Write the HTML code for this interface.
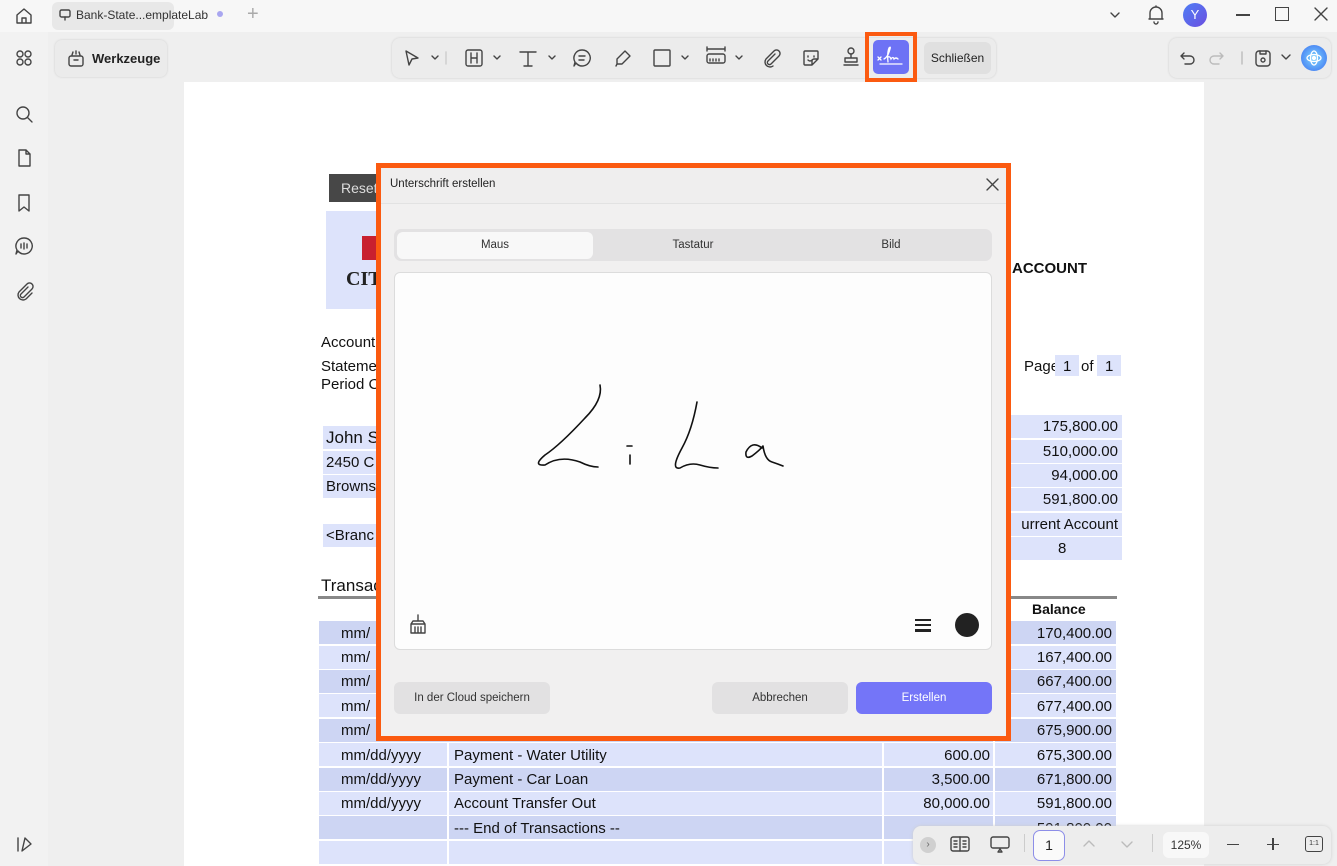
<!DOCTYPE html>
<html><head><meta charset="utf-8"><style>
*{box-sizing:border-box;margin:0;padding:0}
body{width:1337px;height:866px;overflow:hidden;background:#efefef;font-family:"Liberation Sans",sans-serif;position:relative;color:#222}
.a{position:absolute}
.ic{position:absolute;fill:none;stroke:#444;stroke-width:1.4;stroke-linecap:round;stroke-linejoin:round}
.cal{font-family:"Liberation Sans",sans-serif;font-size:15px;color:#111}
.cell{position:absolute;height:23px;font-size:15px;color:#111;line-height:23px;white-space:nowrap;overflow:hidden}
.r{text-align:right;padding-right:4px}
</style></head><body>
<!-- top bar -->
<div class="a" style="left:0;top:0;width:1337px;height:32px;background:#f7f7f7"></div>
<svg class="ic" style="left:14px;top:6px" width="20" height="20" viewBox="0 0 20 20"><path d="M3 9 L10 3 L17 9 V17 H3 Z M8 17 V12 H12 V17"/></svg>
<div class="a" style="left:52px;top:2px;width:122px;height:28px;background:#e8e8e8;border-radius:6px"></div>
<svg class="ic" style="left:59px;top:9px" width="12" height="12" viewBox="0 0 12 12"><rect x="1" y="1" width="10" height="7" rx="1.5"/><path d="M6 8v3"/></svg>
<div class="a" style="left:76px;top:8px;font-size:12px;color:#333">Bank-State...emplateLab</div>
<div class="a" style="left:217px;top:11px;width:6px;height:6px;border-radius:50%;background:#a9a6f0"></div>
<div class="a" style="left:247px;top:3px;font-size:20px;color:#aaa;font-weight:300">+</div>
<svg class="ic" style="left:1108px;top:8px" width="14" height="14" viewBox="0 0 14 14"><path d="M3 5l4 4 4-4"/></svg>
<svg class="ic" style="left:1146px;top:4px" width="20" height="22" viewBox="0 0 20 22"><path d="M4 15 V9 a6 6 0 0 1 12 0 V15 H4 M3 15 H17 M8 18 a2 2 0 0 0 4 0 M10 2v1"/></svg>
<div class="a" style="left:1183px;top:3px;width:24px;height:24px;border-radius:50%;background:linear-gradient(135deg,#4f7ef5,#6b4fe0);color:#fff;font-size:13px;text-align:center;line-height:24px">Y</div>
<div class="a" style="left:1236px;top:14px;width:14px;height:1.5px;background:#444"></div>
<div class="a" style="left:1275px;top:7px;width:14px;height:14px;border:1.5px solid #444"></div>
<svg class="ic" style="left:1314px;top:7px" width="14" height="14" viewBox="0 0 14 14"><path d="M1 1l12 12M13 1L1 13"/></svg>

<!-- left sidebar -->
<div class="a" style="left:0;top:32px;width:48px;height:834px;background:#f2f2f2"></div>
<svg class="ic" style="left:14px;top:48px" width="20" height="20" viewBox="0 0 20 20"><circle cx="6" cy="6" r="3"/><circle cx="14" cy="6" r="3"/><circle cx="6" cy="14" r="3"/><circle cx="14" cy="14" r="3"/></svg>
<svg class="ic" style="left:14px;top:104px" width="20" height="20" viewBox="0 0 20 20"><circle cx="9" cy="9" r="6"/><path d="M13.5 13.5L18 18"/></svg>
<svg class="ic" style="left:14px;top:148px" width="20" height="20" viewBox="0 0 20 20"><path d="M5 2h7l4 4v12H5z M12 2v4h4"/></svg>
<svg class="ic" style="left:14px;top:193px" width="20" height="20" viewBox="0 0 20 20"><path d="M5 2h10v16l-5-4-5 4z"/></svg>
<svg class="ic" style="left:14px;top:236px" width="20" height="20" viewBox="0 0 20 20"><path d="M10 2a8 8 0 1 1-6 13l-2 3 1-4A8 8 0 0 1 10 2zM7 8v4M10 7v6M13 8v4"/></svg>
<svg class="ic" style="left:14px;top:281px" width="20" height="20" viewBox="0 0 20 20"><path d="M14 6l-7 7a2 2 0 0 0 3 3l8-8a3.5 3.5 0 0 0-5-5l-8 8a5 5 0 0 0 7 7l6-6"/></svg>
<svg class="ic" style="left:14px;top:834px" width="20" height="20" viewBox="0 0 20 20"><path d="M4 4v13M8 17l3-13 6 6z"/></svg>

<!-- toolbar -->
<div class="a" style="left:55px;top:40px;width:112px;height:37px;background:#ebebeb;border-radius:7px;box-shadow:0 0 2px #ccc"></div>
<svg class="ic" style="left:66px;top:48px" width="20" height="20" viewBox="0 0 20 20"><rect x="3" y="8" width="14" height="10" rx="2"/><path d="M8 12h4M6 7l1-3M10 6V3M14 7l-1-3"/></svg>
<div class="a" style="left:92px;top:51px;font-size:13px;font-weight:bold;color:#222">Werkzeuge</div>
<div class="a" style="left:392px;top:38px;width:604px;height:40px;background:#ececec;border-radius:8px;box-shadow:0 0 2px #ccc"></div>
<svg class="ic" style="left:402px;top:48px" width="50" height="20" viewBox="0 0 50 20"><path d="M4 3l12 7-6 1-3 6z M30 8l3 3 3-3"/><path d="M44 4v12" stroke="#ccc"/></svg>
<svg class="ic" style="left:464px;top:48px" width="100" height="20" viewBox="0 0 100 20"><rect x="2" y="2" width="16" height="16" rx="2"/><path d="M7 5v10M13 5v10M7 10h6 M30 8l3 3 3-3 M56 4h16M64 4v14M60 18h8 M85 8l3 3 3-3"/></svg>
<svg class="ic" style="left:572px;top:48px" width="20" height="20" viewBox="0 0 20 20"><path d="M10 2a8 8 0 1 1-6 13l-2 3 1-4A8 8 0 0 1 10 2zM7 8h6M7 12h5"/></svg>
<svg class="ic" style="left:613px;top:48px" width="20" height="20" viewBox="0 0 20 20"><path d="M12 3l5 5-8 8H4v-5zM4 16l-1 2"/></svg>
<svg class="ic" style="left:652px;top:48px" width="40" height="20" viewBox="0 0 40 20"><rect x="2" y="2" width="16" height="16" rx="1"/><path d="M30 8l3 3 3-3"/></svg>
<svg class="ic" style="left:705px;top:46px" width="42" height="22" viewBox="0 0 42 22"><path d="M2 3h18M2 1v4M20 1v4"/><rect x="2" y="8" width="18" height="9" rx="2"/><path d="M5 13v2M8 13v2M11 13v2M14 13v2 M31 10l3 3 3-3"/></svg>
<svg class="ic" style="left:761px;top:48px" width="20" height="20" viewBox="0 0 20 20"><path d="M14 6l-7 7a2 2 0 0 0 3 3l8-8a3.5 3.5 0 0 0-5-5l-8 8a5 5 0 0 0 7 7"/></svg>
<svg class="ic" style="left:801px;top:48px" width="20" height="20" viewBox="0 0 20 20"><path d="M4 3h12a1 1 0 0 1 1 1v7l-6 6H4a1 1 0 0 1-1-1V4a1 1 0 0 1 1-1zM11 17v-4a2 2 0 0 1 2-2h4M7 8v1M13 8v1M7 12q2 2 4 0"/></svg>
<svg class="ic" style="left:841px;top:46px" width="20" height="22" viewBox="0 0 20 22"><circle cx="10" cy="5" r="3"/><path d="M10 8v4M4 12h12v4H4zM3 19h14"/></svg>
<div class="a" style="left:865px;top:32px;width:52px;height:50px;border:4px solid #fb5a10"></div>
<div class="a" style="left:873px;top:40px;width:36px;height:34px;background:#6d72f5;border-radius:5px"></div>
<svg class="a" style="left:876px;top:45px" width="30" height="24" viewBox="0 0 30 24" fill="none" stroke="#fff" stroke-width="1.3" stroke-linecap="round"><path d="M2 12l3 3M5 12l-3 3M8 14q4-2 6-10 1-3-1-1-2 5-1 14M12 12q2-1 3 2 2-3 3 0 2-2 4 0M4 19h22"/></svg>
<div class="a" style="left:924px;top:42px;width:67px;height:32px;background:#e0e0e0;border-radius:6px;font-size:12px;color:#222;text-align:center;line-height:32px">Schließen</div>
<div class="a" style="left:1169px;top:38px;width:162px;height:40px;background:#ececec;border-radius:8px;box-shadow:0 0 2px #ccc"></div>
<svg class="ic" style="left:1178px;top:48px" width="100" height="20" viewBox="0 0 100 20"><path d="M6 5L3 8l3 3M3 8h9a4 4 0 0 1 0 8H7"/><path d="M42 5l3 3-3 3M45 8h-9a4 4 0 0 0 0 8h5 M64 4v12" stroke="#bbb"/><rect x="78" y="3" width="14" height="15" rx="3"/><circle cx="85" cy="12" r="2"/><path d="M82 3v3h6V3"/></svg>
<svg class="ic" style="left:1279px;top:50px" width="14" height="14" viewBox="0 0 14 14"><path d="M3 5l4 4 4-4"/></svg>
<div class="a" style="left:1301px;top:45px;width:26px;height:26px;border-radius:50%;background:radial-gradient(circle,#7fd6ff,#3a6df0)"></div>
<svg class="a" style="left:1305px;top:49px" width="18" height="18" viewBox="0 0 18 18" fill="none" stroke="#fff" stroke-width="1.3"><ellipse cx="9" cy="9" rx="7" ry="3.5"/><ellipse cx="9" cy="9" rx="3.5" ry="7"/><circle cx="9" cy="9" r="1.5" fill="#fff"/></svg>

<!-- page -->
<div class="a" style="left:184px;top:82px;width:1020px;height:784px;background:#fff"></div>
<div class="a" style="left:329px;top:174px;width:60px;height:28px;background:#474747;color:#ddd;font-size:14px;line-height:28px;padding-left:12px">Reset</div>
<div class="a" style="left:326px;top:211px;width:60px;height:98px;background:#dde3fb"></div>
<div class="a" style="left:362px;top:236px;width:14px;height:24px;background:#c8202f"></div>
<div class="a" style="left:346px;top:268px;font-family:'Liberation Serif',serif;font-weight:bold;font-size:20px;color:#222">CIT</div>
<div class="a" style="left:1012px;top:260px;font-size:15px;font-weight:bold;color:#111">ACCOUNT</div>
<div class="a cal" style="left:321px;top:334px">Account</div>
<div class="a cal" style="left:321px;top:358px">Stateme</div>
<div class="a cal" style="left:321px;top:376px">Period C</div>
<div class="a cal" style="left:1024px;top:358px">Page</div>
<div class="a" style="left:1055px;top:355px;width:24px;height:21px;background:#dde3fb"></div>
<div class="a cal" style="left:1063px;top:358px">1</div>
<div class="a cal" style="left:1081px;top:358px">of</div>
<div class="a" style="left:1097px;top:355px;width:24px;height:21px;background:#dde3fb"></div>
<div class="a cal" style="left:1105px;top:358px">1</div>
<div class="cell" style="left:323px;top:426px;width:60px;background:#dde3fb;font-size:17px;padding-left:3px">John S</div>
<div class="cell" style="left:323px;top:451px;width:60px;background:#dde3fb;padding-left:3px">2450 C</div>
<div class="cell" style="left:323px;top:475px;width:60px;background:#dde3fb;padding-left:3px">Browns</div>
<div class="cell" style="left:323px;top:524px;width:60px;background:#dde3fb;padding-left:3px">&lt;Branc</div>
<div class="cell r" style="left:1010px;top:415px;width:112px;background:#dde3fb">175,800.00</div>
<div class="cell r" style="left:1010px;top:440px;width:112px;background:#dde3fb">510,000.00</div>
<div class="cell r" style="left:1010px;top:464px;width:112px;background:#dde3fb">94,000.00</div>
<div class="cell r" style="left:1010px;top:488px;width:112px;background:#dde3fb">591,800.00</div>
<div class="cell r" style="left:1010px;top:513px;width:112px;background:#dde3fb">urrent Account</div>
<div class="cell" style="left:1010px;top:537px;width:112px;background:#dde3fb;padding-left:48px">8</div>
<div class="a" style="left:321px;top:576px;font-size:17px;color:#111">Transac</div>
<div class="a" style="left:318px;top:596px;width:799px;height:3px;background:#888"></div>
<div class="a" style="left:1032px;top:601px;font-size:14px;font-weight:bold;color:#111">Balance</div>
<!-- rows -->
<div class="a" style="left:319px;top:621px;width:797px;height:245px;background:#fff"></div>
<div id="rows"></div>
<div class="cell" style="left:319px;top:621px;width:797px;background:#cdd5f3"></div>
<div class="cell" style="left:319px;top:646px;width:797px;background:#dde3fb"></div>
<div class="cell" style="left:319px;top:670px;width:797px;background:#cdd5f3"></div>
<div class="cell" style="left:319px;top:694px;width:797px;background:#dde3fb"></div>
<div class="cell" style="left:319px;top:719px;width:797px;background:#cdd5f3"></div>
<div class="cell" style="left:319px;top:743px;width:797px;background:#dde3fb"></div>
<div class="cell" style="left:319px;top:768px;width:797px;background:#cdd5f3"></div>
<div class="cell" style="left:319px;top:792px;width:797px;background:#dde3fb"></div>
<div class="cell" style="left:319px;top:816px;width:797px;background:#cdd5f3"></div>
<div class="cell" style="left:319px;top:841px;width:797px;background:#dde3fb"></div>
<div class="a" style="left:447px;top:743px;width:2px;height:123px;background:#fff"></div>
<div class="a" style="left:882px;top:743px;width:2px;height:123px;background:#fff"></div>
<div class="a" style="left:993px;top:621px;width:2px;height:245px;background:#fff"></div>
<div class="cell" style="left:341px;top:622px">mm/</div>
<div class="cell" style="left:341px;top:646px">mm/</div>
<div class="cell" style="left:341px;top:670px">mm/</div>
<div class="cell" style="left:341px;top:695px">mm/</div>
<div class="cell" style="left:341px;top:719px">mm/</div>
<div class="cell" style="left:341px;top:744px">mm/dd/yyyy</div>
<div class="cell" style="left:341px;top:768px">mm/dd/yyyy</div>
<div class="cell" style="left:341px;top:792px">mm/dd/yyyy</div>
<div class="cell" style="left:454px;top:744px">Payment - Water Utility</div>
<div class="cell" style="left:454px;top:768px">Payment - Car Loan</div>
<div class="cell" style="left:454px;top:792px">Account Transfer Out</div>
<div class="cell" style="left:454px;top:817px">--- End of Transactions --</div>
<div class="cell r" style="left:884px;top:744px;width:110px">600.00</div>
<div class="cell r" style="left:884px;top:768px;width:110px">3,500.00</div>
<div class="cell r" style="left:884px;top:792px;width:110px">80,000.00</div>
<div class="cell r" style="left:995px;top:622px;width:121px">170,400.00</div>
<div class="cell r" style="left:995px;top:646px;width:121px">167,400.00</div>
<div class="cell r" style="left:995px;top:670px;width:121px">667,400.00</div>
<div class="cell r" style="left:995px;top:695px;width:121px">677,400.00</div>
<div class="cell r" style="left:995px;top:719px;width:121px">675,900.00</div>
<div class="cell r" style="left:995px;top:744px;width:121px">675,300.00</div>
<div class="cell r" style="left:995px;top:768px;width:121px">671,800.00</div>
<div class="cell r" style="left:995px;top:792px;width:121px">591,800.00</div>
<div class="cell r" style="left:995px;top:817px;width:121px">591,800.00</div>

<!-- dialog -->
<div class="a" style="left:376px;top:163px;width:635px;height:578px;border:5px solid #fb5a10;background:#f1f0f0"></div>
<div class="a" style="left:381px;top:168px;width:625px;height:36px;background:#efeeee;border-bottom:1px solid #e2e2e2"></div>
<div class="a" style="left:390px;top:178px;font-size:11.5px;color:#222">Unterschrift erstellen</div>
<svg class="ic" style="left:986px;top:178px" width="13" height="13" viewBox="0 0 13 13"><path d="M1 1l11 11M12 1L1 12"/></svg>
<div class="a" style="left:394px;top:229px;width:598px;height:32px;background:#e3e2e3;border-radius:7px"></div>
<div class="a" style="left:397px;top:232px;width:196px;height:27px;background:#f8f8f8;border-radius:6px"></div>
<div class="a" style="left:397px;top:239px;width:196px;text-align:center;font-size:11.5px;color:#333">Maus</div>
<div class="a" style="left:595px;top:239px;width:196px;text-align:center;font-size:11.5px;color:#333">Tastatur</div>
<div class="a" style="left:793px;top:239px;width:196px;text-align:center;font-size:11.5px;color:#333">Bild</div>
<div class="a" style="left:394px;top:272px;width:598px;height:378px;background:#fdfdfd;border:1px solid #dcdcdc;border-radius:6px"></div>
<svg class="a" style="left:520px;top:378px" width="280" height="100" viewBox="520 378 280 100" fill="none" stroke="#111" stroke-width="1.6" stroke-linecap="round" stroke-linejoin="round"><path d="M600 385 Q603 400 585 418 Q560 445 545 455 Q532 466 545 465 Q560 455 580 462 Q590 467 598 467"/><path d="M627 446 L632 446 M630 455 L630 464"/><path d="M697 402 Q692 430 682 448 Q670 470 680 468 Q690 462 700 465 Q710 468 718 468"/><path d="M762 448 Q752 440 746 452 Q745 460 752 456 Q760 450 763 446 Q765 460 772 462 Q778 464 783 466"/></svg>
<svg class="ic" style="left:408px;top:613px" width="20" height="22" viewBox="0 0 20 22"><path d="M10 2v6M7 8h6M3 11h14v9H3zM3 11l2-3h10l2 3M7 14v6M10 14v6M13 14v6"/></svg>
<div class="a" style="left:915px;top:619px;width:16px;height:1.5px;background:#222"></div>
<div class="a" style="left:915px;top:624px;width:16px;height:1.5px;background:#222"></div>
<div class="a" style="left:915px;top:629px;width:16px;height:2.5px;background:#222"></div>
<div class="a" style="left:955px;top:613px;width:24px;height:24px;border-radius:50%;background:#222"></div>
<div class="a" style="left:394px;top:682px;width:156px;height:32px;background:#e2e1e2;border-radius:6px;font-size:11.5px;color:#333;text-align:center;line-height:32px">In der Cloud speichern</div>
<div class="a" style="left:712px;top:682px;width:136px;height:32px;background:#e2e1e2;border-radius:6px;font-size:11.5px;color:#333;text-align:center;line-height:32px">Abbrechen</div>
<div class="a" style="left:856px;top:682px;width:136px;height:32px;background:#7475f8;border-radius:6px;font-size:11.5px;color:#fff;text-align:center;line-height:32px">Erstellen</div>

<!-- bottom bar -->
<div class="a" style="left:913px;top:826px;width:418px;height:38px;background:#ededed;border-radius:8px;box-shadow:0 0 3px #ccc"></div>
<div class="a" style="left:920px;top:837px;width:16px;height:16px;border-radius:50%;background:#d0d0d0;font-size:10px;color:#666;text-align:center;line-height:16px">›</div>
<svg class="ic" style="left:950px;top:835px" width="20" height="18" viewBox="0 0 20 18"><rect x="1" y="2" width="18" height="14" rx="2"/><path d="M10 2v14M4 6h3M4 9h3M4 12h3M13 6h3M13 9h3M13 12h3"/></svg>
<svg class="ic" style="left:989px;top:835px" width="22" height="20" viewBox="0 0 22 20"><path d="M4 2h14a2 2 0 0 1 2 2v7a2 2 0 0 1-2 2H4a2 2 0 0 1-2-2V4a2 2 0 0 1 2-2zM11 14l-2 3h4z"/></svg>
<div class="a" style="left:1024px;top:834px;width:1px;height:18px;background:#ccc"></div>
<div class="a" style="left:1033px;top:830px;width:32px;height:31px;border:1.3px solid #8d8ee8;border-radius:7px;background:#fafafa;font-size:14px;text-align:center;line-height:29px;color:#222">1</div>
<svg class="ic" style="left:1082px;top:838px;stroke:#bbb" width="60" height="12" viewBox="0 0 60 12"><path d="M2 8l5-5 5 5M40 4l5 5 5-5"/></svg>
<div class="a" style="left:1152px;top:834px;width:1px;height:18px;background:#ccc"></div>
<div class="a" style="left:1163px;top:832px;width:46px;height:26px;background:#f8f8f8;border-radius:6px;font-size:12px;text-align:center;line-height:26px;color:#333">125%</div>
<div class="a" style="left:1227px;top:844px;width:12px;height:1.4px;background:#444"></div>
<div class="a" style="left:1267px;top:844px;width:12px;height:1.4px;background:#444"></div>
<div class="a" style="left:1272.3px;top:838px;width:1.4px;height:12px;background:#444"></div>
<div class="a" style="left:1305px;top:836px;width:18px;height:16px;border:1.3px solid #444;border-radius:3px;font-size:7px;text-align:center;line-height:14px;color:#333">1:1</div>
</body></html>
